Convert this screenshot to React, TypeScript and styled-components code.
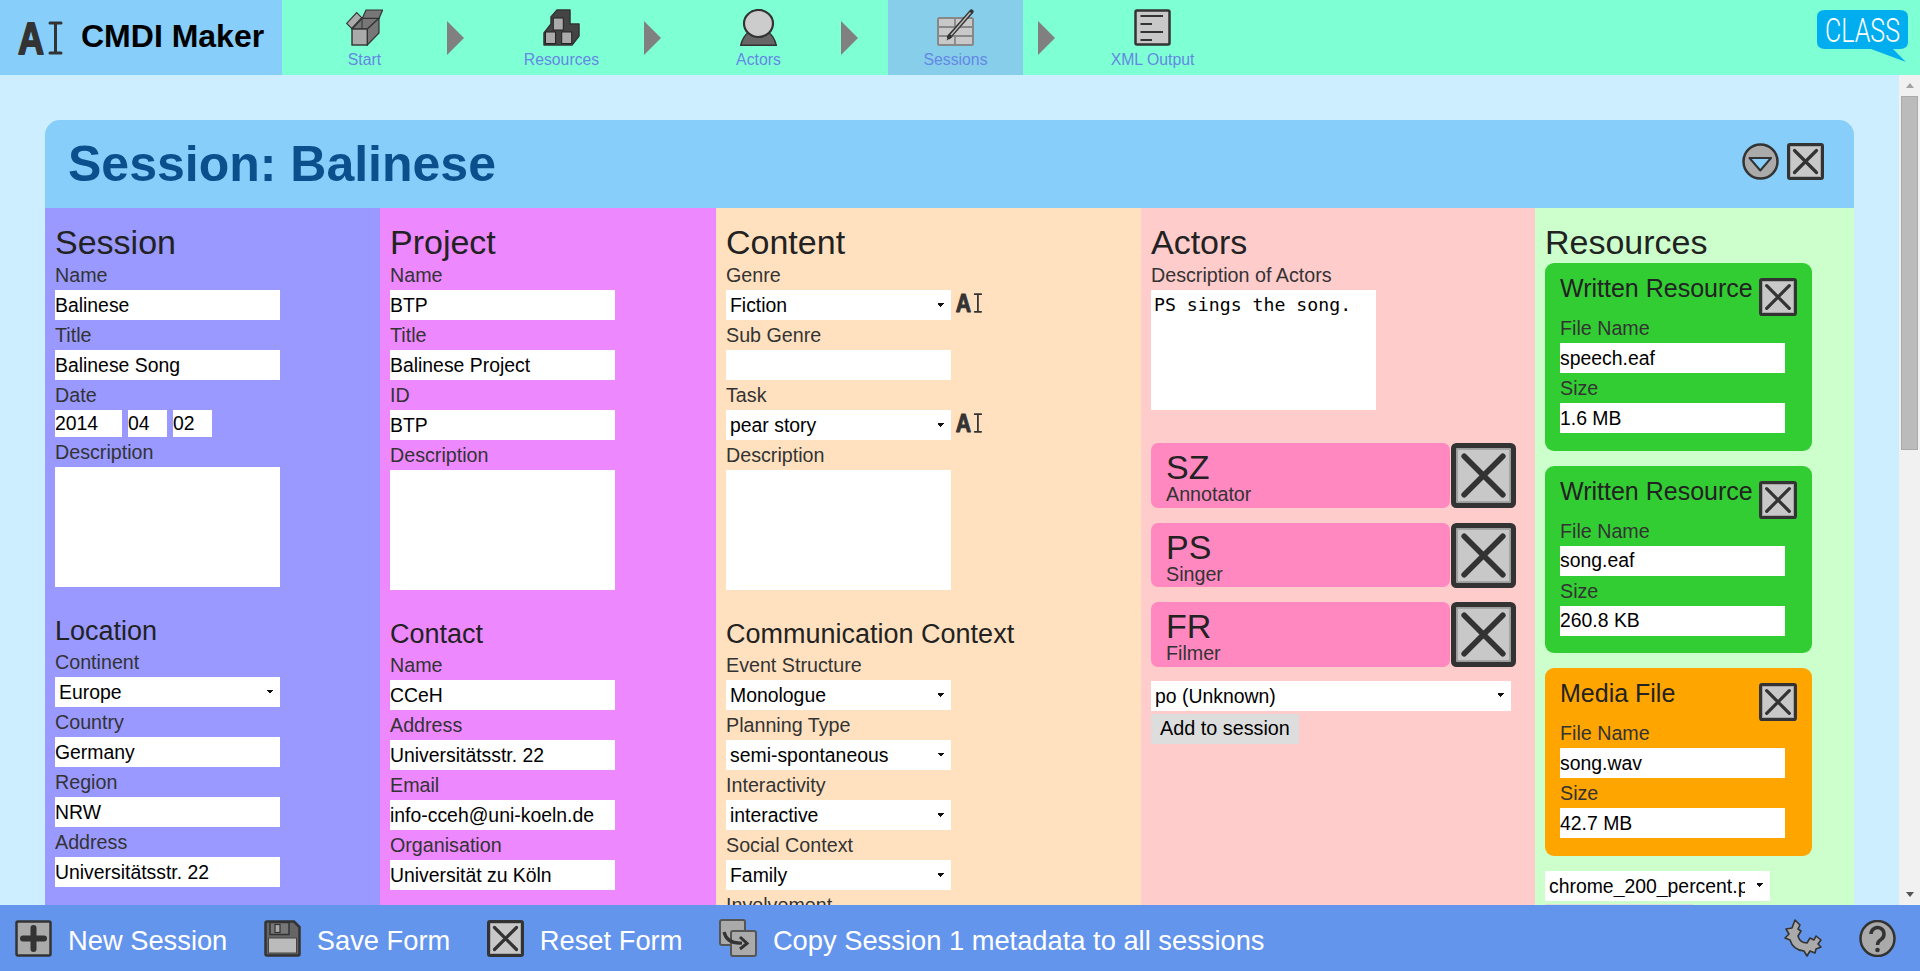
import styled, { createGlobalStyle } from 'styled-components';

const GlobalStyle = createGlobalStyle`
  html, body {
    margin: 0;
    height: 100%;
    overflow: hidden;
  }
  body {
    font-family: "Liberation Sans", Arial, sans-serif;
    font-size: 19.7px;
    color: #333;
  }
`

const Pagina = styled.div`
  height: 100vh;
  display: flex;
  flex-direction: column;
  background-color: #cceeff;
`
const TopBar = styled.header`
  flex: 0 0 75px;
  display: flex;
  background-color: #7fffd4;
`
const Logo = styled.div`
  flex: 0 0 282px;
  display: flex;
  align-items: center;
  gap: 19px;
  padding-left: 17px;
  box-sizing: border-box;
  background-color: #87cefa;
`
const LogoName = styled.span`
  margin-bottom: 2px;
  font-size: 32px;
  font-weight: bold;
  color: #000;
`
const Nav = styled.nav`
  flex: 1;
  display: flex;
  padding: 0 12px 0 15px;
`
const NavItem = styled.div<{ $active?: boolean }>`
  flex: 0 0 135px;
  display: flex;
  flex-direction: column;
  align-items: center;
  padding-top: 9px;
  box-sizing: border-box;
  background-color: ${props => props.$active ? '#87ceeb' : 'transparent'};
`
const NavLabel = styled.span`
  margin-top: 5px;
  font-size: 15.8px;
  line-height: 18px;
  color: #6488e4;
`
const NavArrow = styled.div`
  flex: 0 0 62px;
  padding: 21px 0 0 15px;
  box-sizing: border-box;
  &::before {
    content: '';
    display: block;
    width: 0;
    height: 0;
    border-left: 17px solid #808080;
    border-top: 17px solid transparent;
    border-bottom: 17px solid transparent;
  }
`
const ClassLogo = styled.svg`
  margin: 10px 0 0 auto;
  overflow: visible;
`
const Corpo = styled.div`
  flex: 1;
  min-height: 0;
  display: flex;
`
const Main = styled.main`
  flex: 1;
  min-width: 0;
  overflow: hidden;
  padding: 45px;
  box-sizing: border-box;
`
// a barra de rolagem do print
const Trilho = styled.div`
  flex: 0 0 21px;
  display: flex;
  flex-direction: column;
  align-items: center;
  background-color: #f1f1f1;
`
const SetaRolagem = styled.div<{ $baixo?: boolean }>`
  flex: 0 0 21px;
  display: flex;
  align-items: center;
  justify-content: center;
  &::before {
    content: '';
    width: 0;
    height: 0;
    border-left: 4px solid transparent;
    border-right: 4px solid transparent;
    ${props => props.$baixo ? 'border-top: 5px solid #555;' : 'border-bottom: 5px solid #a3a3a3;'}
  }
`
const Polegar = styled.div`
  flex: 0 0 354px;
  width: 17px;
  box-sizing: border-box;
  border: 1px solid #aaa;
  background-color: #bbb;
`
const Espaco = styled.div`
  flex: 1;
`
const SessionHead = styled.div`
  height: 88px;
  display: flex;
  align-items: center;
  justify-content: space-between;
  padding: 0 30px 0 23px;
  border-radius: 15px 15px 0 0;
  background-color: #87cefa;
`
const SessionTitle = styled.h1`
  margin: 0;
  font-size: 50px;
  font-weight: bold;
  color: #0b4f8c;
`
const HeadIcons = styled.div`
  display: flex;
  gap: 8px;
  margin-bottom: 6px;
`
const Colunas = styled.div`
  display: flex;
  min-height: 1670px;
`
const Coluna = styled.section<{ $largura: number; $cor: string }>`
  flex: 0 0 ${props => props.$largura}px;
  padding: 17px 10px 0;
  box-sizing: border-box;
  background-color: ${props => props.$cor};
`
const Titulo = styled.h2`
  margin: 0;
  font-size: 34px;
  font-weight: normal;
  line-height: 35px;
  color: #222;
`
const Subtitulo = styled.h3`
  margin: 28px 0 0;
  font-size: 27px;
  font-weight: normal;
  line-height: 32px;
  color: #222;
`
const Rotulo = styled.div`
  height: 30px;
  line-height: 30px;
  color: #333;
`
const Entrada = styled.input<{ $largura?: number }>`
  display: block;
  width: ${props => props.$largura ?? 225}px;
  height: 30px;
  padding: 0;
  border: 0;
  box-sizing: border-box;
  background-color: #fff;
  font: 19.4px "Liberation Sans", Arial, sans-serif;
  color: #000;
`
const DataLinha = styled.div`
  display: flex;
  gap: 6px;
`
const DataEntrada = styled(Entrada)`
  height: 27px;
`
const AreaTexto = styled.textarea<{ $mono?: boolean }>`
  display: block;
  width: 225px;
  height: 120px;
  padding: 4px 3px;
  border: 0;
  box-sizing: border-box;
  resize: none;
  background-color: #fff;
  font: ${props => props.$mono ? '18.2px "DejaVu Sans Mono", monospace' : '19.4px "Liberation Sans", sans-serif'};
  color: #000;
`
const Selecao = styled.select<{ $largura?: number }>`
  display: block;
  width: ${props => props.$largura ?? 225}px;
  height: 30px;
  padding: 0 25px 0 4px;
  border: 0;
  border-radius: 0;
  box-sizing: border-box;
  appearance: none;
  font: 19.4px "Liberation Sans", Arial, sans-serif;
  color: #000;
  background-color: #fff;
  background-image: linear-gradient(45deg, transparent 50%, #111 50%), linear-gradient(135deg, #111 50%, transparent 50%);
  background-position: right 10px center, right 7px center;
  background-size: 3px 5px;
  background-repeat: no-repeat;
`
const SelecaoLinha = styled.div`
  display: flex;
  align-items: center;
  gap: 4px;
`
const MarcaAI = styled.svg`
  overflow: visible;
`
const MarcaPequena = styled(MarcaAI)`
  margin-bottom: 4px;
`
const Botao = styled.button`
  display: block;
  width: 148px;
  height: 30px;
  margin-top: 3px;
  padding: 0;
  border: 0;
  background-color: #ddd;
  font: 19.8px "Liberation Sans", Arial, sans-serif;
  color: #000;
`
const AtoresLista = styled.div`
  display: flex;
  flex-direction: column;
  gap: 15px;
  margin: 33px 0 14px;
`
const AtorLinha = styled.div`
  display: flex;
  gap: 1px;
  height: 64.67px;
`
const AtorCard = styled.div`
  flex: 0 0 299px;
  padding: 7px 0 0 15px;
  box-sizing: border-box;
  border-radius: 7px;
  background-color: #ff88c0;
`
const AtorNome = styled.div`
  font-size: 34px;
  line-height: 34px;
  color: #222;
`
const AtorPapel = styled.div`
  line-height: 20px;
  color: #333;
`
const Recursos = styled.div`
  display: flex;
  flex-direction: column;
  gap: 15px;
  margin: 3px 0 15px;
`
const RecursoCard = styled.div<{ $cor: string }>`
  width: 267px;
  height: 187.67px;
  padding: 15px 15px 0;
  box-sizing: border-box;
  border-radius: 9px;
  background-color: ${props => props.$cor};
`
const RecursoTopo = styled.div`
  display: flex;
  justify-content: space-between;
  height: 35px;
`
const RecursoTitulo = styled.span`
  font-size: 25px;
  line-height: 20px;
  white-space: nowrap;
  color: #222;
`
const BottomBar = styled.footer`
  flex: 0 0 66px;
  display: flex;
  align-items: center;
  gap: 36.5px;
  padding: 0 24px 0 15px;
  background-color: #6495ed;
`
const BarraItem = styled.div`
  display: flex;
  align-items: center;
  gap: 16px;
`
const BarraTexto = styled.span`
  margin-top: 6px;
  font-size: 27.3px;
  color: #fff;
`
const BarraDireita = styled.div`
  display: flex;
  align-items: center;
  gap: 36px;
  margin-left: auto;
`

const Icone = ({ tam = 37, children }: any) => (
  <svg width={tam} height={tam} viewBox="0 0 37 37">{children}</svg>
);

const IconeX = ({ tam }: any) => (
  <Icone tam={tam}>
    <rect x="1.5" y="1.5" width="34" height="34" rx="1.5" fill="#c8c8c8" stroke="#333" strokeWidth="3" />
    <rect x="3.5" y="3.5" width="30" height="30" fill="none" stroke="#999" strokeWidth="0.7" />
    <path d="M7.5 7.5 L29.5 29.5 M29.5 7.5 L7.5 29.5" stroke="#333" strokeWidth="3.2" strokeLinecap="round" />
  </Icone>
);

// o logo: A como texto, o cursor desenhado
const GlifoAI = () => (
  <>
    <text x="1" y="32.5" fontFamily="Liberation Sans" fontWeight="bold" fontSize="44" fill="#333" stroke="#333" strokeWidth="1.8" strokeLinejoin="round" textLength="26" lengthAdjust="spacingAndGlyphs">A</text>
    <path d="M33 2 H44 M33 32 H44 M38.5 2 V32" stroke="#333" strokeWidth="3" strokeLinecap="round" fill="none" />
  </>
);

const IconeAI = () => (
  <MarcaAI width="45" height="34" viewBox="0 0 45 34"><GlifoAI /></MarcaAI>
);

const IconeAIPequeno = () => (
  <MarcaPequena width="27" height="20" viewBox="0 0 45 34"><GlifoAI /></MarcaPequena>
);

const IconeStart = () => (
  <Icone>
    <path d="M6 20 L16.3 9.3 H33 L21.3 20 Z" fill="#777" stroke="#333" strokeWidth="1.2" />
    <path d="M16.3 9.3 L20 1 H36.7 L33 9.3 Z" fill="#777" stroke="#333" strokeWidth="1.2" />
    <path d="M0.7 14.3 L10.7 3.7 L15.7 8.7 L5.7 19.3 Z" fill="#aaa" stroke="#333" strokeWidth="1.2" />
    <path d="M21.3 20 L33 9.3 V24 L21.3 36 Z" fill="#777" stroke="#333" strokeWidth="1.2" />
    <path d="M16 10 V20" stroke="#333" strokeWidth="1" />
    <rect x="6" y="20" width="15.3" height="16" fill="#aaa" stroke="#333" strokeWidth="1.4" />
  </Icone>
);

const IconeResources = () => (
  <Icone>
    <path d="M1 24 L8 15 V8 L14 1 H27 V15 H36 V27 L29 36 H1 Z" fill="#444" stroke="#333" strokeWidth="1.5" strokeLinejoin="round" />
    <rect x="10.3" y="9" width="10" height="12" fill="#aaa" stroke="#222" strokeWidth="1" />
    <rect x="2.5" y="23" width="10" height="11.5" fill="#aaa" stroke="#222" strokeWidth="1" />
    <rect x="18.7" y="23" width="10" height="11.5" fill="#aaa" stroke="#222" strokeWidth="1" />
  </Icone>
);

const IconeActors = () => (
  <Icone>
    <path d="M0.7 36.3 Q3 27 9 23 H28 Q34 27 36.3 36.3 Z" fill="#666" stroke="#333" strokeWidth="1.5" />
    <ellipse cx="18.5" cy="14.5" rx="14.5" ry="13.5" fill="#ccc" stroke="#333" strokeWidth="2.2" />
  </Icone>
);

const IconeSessions = () => (
  <Icone>
    <rect x="1" y="9" width="35" height="27" rx="1.5" fill="#c8c8c8" stroke="#888" strokeWidth="2" />
    <path d="M1 18 H36 M1 27 H36 M18 9 V18 M18 27 V36" stroke="#888" strokeWidth="1.8" />
    <path d="M12 28 L34.5 2.5" stroke="#333" strokeWidth="4.2" strokeLinecap="round" />
    <path d="M14 26 L33.5 3.5" stroke="#bbb" strokeWidth="1.5" />
    <path d="M9.5 31.5 L12 25 L15.5 28 Z" fill="#333" />
  </Icone>
);

const IconeXml = () => (
  <Icone>
    <rect x="1.5" y="1.5" width="34" height="34" rx="1.5" fill="#c8c8c8" stroke="#333" strokeWidth="2.5" />
    <path d="M6.5 7 H29 M6.5 15 H18 M6.5 23 H29 M6.5 31 H18" stroke="#333" strokeWidth="2" />
  </Icone>
);

const IconeSeta = () => (
  <Icone>
    <circle cx="18.5" cy="18.5" r="17" fill="#aaa" stroke="#333" strokeWidth="2.5" />
    <path d="M7.5 15 H29 L18.3 27.5 Z" fill="#87cefa" stroke="#333" strokeWidth="2" strokeLinejoin="round" />
  </Icone>
);

const IconeMais = () => (
  <Icone>
    <rect x="1.5" y="1.5" width="34" height="34" rx="1.5" fill="#aaa" stroke="#333" strokeWidth="2.5" />
    <path d="M18.5 8 V29 M8 18.5 H29" stroke="#333" strokeWidth="6" strokeLinecap="round" />
  </Icone>
);

const IconeSalvar = () => (
  <Icone>
    <path d="M1.5 3 Q1.5 1.5 3 1.5 H30 L35.5 7 V34 Q35.5 35.5 34 35.5 H3 Q1.5 35.5 1.5 34 Z" fill="#666" stroke="#333" strokeWidth="2.5" />
    <rect x="6" y="2.5" width="19" height="12" fill="#777" stroke="#333" strokeWidth="1.5" />
    <rect x="11" y="4.5" width="5" height="8" fill="#aaa" stroke="#333" strokeWidth="1.2" />
    <rect x="4.5" y="18" width="28" height="15" fill="#bbb" stroke="#444" strokeWidth="1" />
  </Icone>
);

const IconeCopiar = () => (
  <svg width="38" height="38" viewBox="0 0 38 38">
    <rect x="1" y="1" width="25" height="25" rx="2" fill="#aaa" stroke="#555" strokeWidth="2" />
    <rect x="12" y="12" width="25" height="25" rx="2" fill="#aaa" stroke="#555" strokeWidth="2" />
    <path d="M5 13 Q8 25 23 24" fill="none" stroke="#333" strokeWidth="3.2" />
    <path d="M21 18 L28 24.5 L21 30" fill="none" stroke="#333" strokeWidth="3" />
  </svg>
);

const IconeConfig = () => (
  <svg width="40" height="38" viewBox="0 0 40 38">
    <path d="M12 1 L17 6 L15 10 L18 12 L15 17 Q17 24 24 24 L27 19 L31 21 L33 17 L38 21 L35 25 L38 28 L33 30 L32 34 L27 32 L24 37 L21 32 Q10 31 7 21 L2 19 L6 15 L3 10 L9 9 Z" fill="#aaa" stroke="#333" strokeWidth="1.6" strokeLinejoin="round" />
  </svg>
);

const IconeAjuda = () => (
  <Icone>
    <ellipse cx="18.5" cy="18.5" rx="17" ry="17.5" fill="#aaa" stroke="#333" strokeWidth="2.5" />
    <path d="M12 14 A6.5 6.5 0 1 1 22 19.5 Q18.5 21.5 18.5 25" fill="none" stroke="#333" strokeWidth="3.5" />
    <circle cx="18.5" cy="30" r="2.3" fill="#333" />
  </Icone>
);

const Campo = ({ rotulo, valor }: any) => (
  <>
    <Rotulo>{rotulo}</Rotulo>
    <Entrada defaultValue={valor} />
  </>
);

const CampoSelecao = ({ rotulo, valor, ai }: any) => (
  <>
    <Rotulo>{rotulo}</Rotulo>
    <SelecaoLinha>
      <Selecao defaultValue={valor}><option>{valor}</option></Selecao>
      {ai && <IconeAIPequeno />}
    </SelecaoLinha>
  </>
);

const Ator = ({ nome, papel }: any) => (
  <AtorLinha>
    <AtorCard>
      <AtorNome>{nome}</AtorNome>
      <AtorPapel>{papel}</AtorPapel>
    </AtorCard>
    <IconeX tam={65} />
  </AtorLinha>
);

const Recurso = ({ titulo, cor, arquivo, tamanho }: any) => (
  <RecursoCard $cor={cor}>
    <RecursoTopo>
      <RecursoTitulo>{titulo}</RecursoTitulo>
      <IconeX tam={38} />
    </RecursoTopo>
    <Campo rotulo="File Name" valor={arquivo} />
    <Campo rotulo="Size" valor={tamanho} />
  </RecursoCard>
);

function App() {
  return (
    <Pagina>
      <GlobalStyle />
      <TopBar>
        <Logo>
          <IconeAI />
          <LogoName>CMDI Maker</LogoName>
        </Logo>
        <Nav>
          <NavItem><IconeStart /><NavLabel>Start</NavLabel></NavItem>
          <NavArrow />
          <NavItem><IconeResources /><NavLabel>Resources</NavLabel></NavItem>
          <NavArrow />
          <NavItem><IconeActors /><NavLabel>Actors</NavLabel></NavItem>
          <NavArrow />
          <NavItem $active><IconeSessions /><NavLabel>Sessions</NavLabel></NavItem>
          <NavArrow />
          <NavItem><IconeXml /><NavLabel>XML Output</NavLabel></NavItem>
          <ClassLogo width="91" height="52" viewBox="0 0 91 52">
            <path d="M8 0 H83 Q91 0 91 7 V32 Q91 39 83 39 H76 L89 52 L54 39 H8 Q0 39 0 32 V7 Q0 0 8 0 Z" fill="#00aeef" />
            <text x="8" y="32" fontFamily="Roboto" fontWeight="300" fontSize="33" fill="#fff" textLength="75" lengthAdjust="spacingAndGlyphs">CLASS</text>
          </ClassLogo>
        </Nav>
      </TopBar>

      <Corpo>
        <Main>
          <SessionHead>
            <SessionTitle>Session: Balinese</SessionTitle>
            <HeadIcons>
              <IconeSeta />
              <IconeX />
            </HeadIcons>
          </SessionHead>
          <Colunas>
            <Coluna $largura={335} $cor="#9999ff">
              <Titulo>Session</Titulo>
              <Campo rotulo="Name" valor="Balinese" />
              <Campo rotulo="Title" valor="Balinese Song" />
              <Rotulo>Date</Rotulo>
              <DataLinha>
                <DataEntrada $largura={67} defaultValue="2014" />
                <DataEntrada $largura={39} defaultValue="04" />
                <DataEntrada $largura={39} defaultValue="02" />
              </DataLinha>
              <Rotulo>Description</Rotulo>
              <AreaTexto />
              <Subtitulo>Location</Subtitulo>
              <CampoSelecao rotulo="Continent" valor="Europe" />
              <Campo rotulo="Country" valor="Germany" />
              <Campo rotulo="Region" valor="NRW" />
              <Campo rotulo="Address" valor="Universitätsstr. 22" />
            </Coluna>

            <Coluna $largura={336} $cor="#ee88ff">
              <Titulo>Project</Titulo>
              <Campo rotulo="Name" valor="BTP" />
              <Campo rotulo="Title" valor="Balinese Project" />
              <Campo rotulo="ID" valor="BTP" />
              <Rotulo>Description</Rotulo>
              <AreaTexto />
              <Subtitulo>Contact</Subtitulo>
              <Campo rotulo="Name" valor="CCeH" />
              <Campo rotulo="Address" valor="Universitätsstr. 22" />
              <Campo rotulo="Email" valor="info-cceh@uni-koeln.de" />
              <Campo rotulo="Organisation" valor="Universität zu Köln" />
            </Coluna>

            <Coluna $largura={425} $cor="#ffe1c0">
              <Titulo>Content</Titulo>
              <CampoSelecao rotulo="Genre" valor="Fiction" ai />
              <Campo rotulo="Sub Genre" valor="" />
              <CampoSelecao rotulo="Task" valor="pear story" ai />
              <Rotulo>Description</Rotulo>
              <AreaTexto />
              <Subtitulo>Communication Context</Subtitulo>
              <CampoSelecao rotulo="Event Structure" valor="Monologue" />
              <CampoSelecao rotulo="Planning Type" valor="semi-spontaneous" />
              <CampoSelecao rotulo="Interactivity" valor="interactive" />
              <CampoSelecao rotulo="Social Context" valor="Family" />
              <CampoSelecao rotulo="Involvement" valor="performance" />
            </Coluna>

            <Coluna $largura={394} $cor="#ffcccc">
              <Titulo>Actors</Titulo>
              <Rotulo>Description of Actors</Rotulo>
              <AreaTexto $mono defaultValue="PS sings the song." />
              <AtoresLista>
                <Ator nome="SZ" papel="Annotator" />
                <Ator nome="PS" papel="Singer" />
                <Ator nome="FR" papel="Filmer" />
              </AtoresLista>
              <Selecao $largura={360} defaultValue="po (Unknown)"><option>po (Unknown)</option></Selecao>
              <Botao>Add to session</Botao>
            </Coluna>

            <Coluna $largura={319} $cor="#ccffcc">
              <Titulo>Resources</Titulo>
              <Recursos>
                <Recurso titulo="Written Resource" cor="#32cd32" arquivo="speech.eaf" tamanho="1.6 MB" />
                <Recurso titulo="Written Resource" cor="#32cd32" arquivo="song.eaf" tamanho="260.8 KB" />
                <Recurso titulo="Media File" cor="#ffa500" arquivo="song.wav" tamanho="42.7 MB" />
              </Recursos>
              <Selecao defaultValue="chrome_200_percent.pak"><option>chrome_200_percent.pak</option></Selecao>
              <Botao>Add to session</Botao>
            </Coluna>
          </Colunas>
        </Main>
        <Trilho>
          <SetaRolagem />
          <Polegar />
          <Espaco />
          <SetaRolagem $baixo />
        </Trilho>
      </Corpo>

      <BottomBar>
        <BarraItem><IconeMais /><BarraTexto>New Session</BarraTexto></BarraItem>
        <BarraItem><IconeSalvar /><BarraTexto>Save Form</BarraTexto></BarraItem>
        <BarraItem><IconeX /><BarraTexto>Reset Form</BarraTexto></BarraItem>
        <BarraItem><IconeCopiar /><BarraTexto>Copy Session 1 metadata to all sessions</BarraTexto></BarraItem>
        <BarraDireita>
          <IconeConfig />
          <IconeAjuda />
        </BarraDireita>
      </BottomBar>
    </Pagina>
  );
}

export default App;
